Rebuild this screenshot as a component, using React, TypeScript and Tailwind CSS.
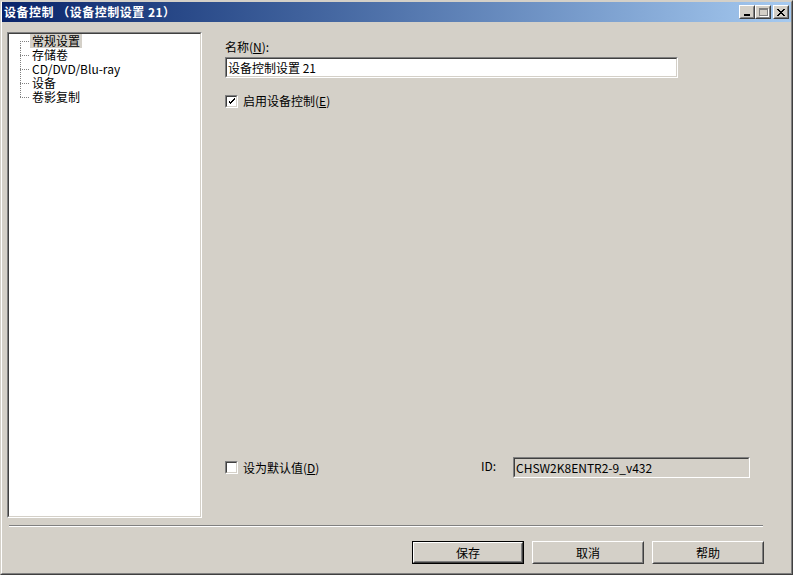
const ui = "font-['Noto_Sans_CJK_SC','Liberation_Sans',sans-serif]";

const treeItems = ["常规设置", "存储卷", "CD/DVD/Blu-ray", "设备", "卷影复制"];

function Checkbox({ checked }: { checked?: boolean }) {
  return (
    <span className="block w-[13px] h-[13px] border border-t-[#808080] border-l-[#808080] border-r-white border-b-white">
      <span className="flex items-center justify-center w-full h-full bg-white border border-t-[#404040] border-l-[#404040] border-r-[#d4d0c8] border-b-[#d4d0c8]">
        {checked && (
          <svg width="7" height="7" viewBox="0 0 7 7" shapeRendering="crispEdges">
            <path d="M0 2h1v3h1v1h1v-1h1v-1h1v-1h1v-1h1v-2h-1v1h-1v1h-1v1h-1v1h-1v-1h-1v-1h-1z" fill="#000" />
          </svg>
        )}
      </span>
    </span>
  );
}

function Sunken({ className, children }: { className: string; children?: React.ReactNode }) {
  return (
    <div className={`border border-t-[#808080] border-l-[#808080] border-r-white border-b-white ${className}`}>
      <div className="h-full border border-t-[#404040] border-l-[#404040] border-r-[#d4d0c8] border-b-[#d4d0c8]">
        {children}
      </div>
    </div>
  );
}

function Button({ label, primary }: { label: string; primary?: boolean }) {
  const inner = (
    <div className="h-full border border-t-white border-l-white border-r-[#404040] border-b-[#404040]">
      <div className="h-full flex items-center justify-center border border-t-transparent border-l-transparent border-r-[#808080] border-b-[#808080] text-[12px] text-black">
        {label}
      </div>
    </div>
  );
  return primary ? (
    <div className="w-[112px] h-[23px] border border-black">{inner}</div>
  ) : (
    <div className="w-[112px] h-[23px]">{inner}</div>
  );
}

function CaptionButton({ children }: { children: React.ReactNode }) {
  return (
    <div className="w-[16px] h-[14px] bg-[#d4d0c8] border border-t-white border-l-white border-r-[#404040] border-b-[#404040]">
      <div className="w-full h-full flex items-center justify-center border border-t-transparent border-l-transparent border-r-[#808080] border-b-[#808080]">
        {children}
      </div>
    </div>
  );
}

export default function App() {
  return (
    <div className={`w-[793px] h-[575px] bg-[#d4d0c8] border border-t-[#d4d0c8] border-l-[#d4d0c8] border-r-[#404040] border-b-[#404040] ${ui}`}>
      <div className="h-full flex flex-col border border-t-transparent border-l-white border-r-[#808080] border-b-[#808080]">
        {/* title bar */}
        <div className="h-[20px] flex items-center justify-between pl-[2px] pr-[2px] bg-gradient-to-r from-[#0a246a] to-[#a6caf0]">
          <span className="text-[12px] font-bold text-white leading-[14px] whitespace-pre tracking-[0.5px]">设备控制 （设备控制设置 21）</span>
          <div className="flex items-center">
            <CaptionButton>
              <span className="block w-[6px] h-[2px] bg-black mt-[6px]" />
            </CaptionButton>
            <CaptionButton>
              <span className="block w-[9px] h-[8px] border border-t-2 border-[#808080] shadow-[1px_1px_0_#fff]" />
            </CaptionButton>
            <div className="w-[2px]" />
            <CaptionButton>
              <svg width="8" height="7" viewBox="0 0 8 7" shapeRendering="crispEdges">
                <path d="M0 0h2v1h1v1h2v-1h1v-1h2v1h-1v1h-1v1h-1v1h1v1h1v1h1v1h-2v-1h-1v-1h-2v1h-1v1h-2v-1h1v-1h1v-1h1v-1h-1v-1h-1v-1h-1z" fill="#000" />
              </svg>
            </CaptionButton>
          </div>
        </div>

        {/* body */}
        <div className="flex pt-[10px] pl-[5px]">
          <div className="w-[195px] h-[486px] border border-t-[#808080] border-l-[#808080] border-r-white border-b-white">
            <div className="h-full bg-white border border-t-[#404040] border-l-[#404040] border-r-[#d4d0c8] border-b-[#d4d0c8] pl-[11px]">
              {treeItems.map((t, i) => (
                <div key={t} className="flex items-center h-[14px]">
                  <svg width="10" height="14" viewBox="0 0 10 14" shapeRendering="crispEdges">
                    <line x1="0.5" y1={i === 0 ? 7 : 0} x2="0.5" y2={i === treeItems.length - 1 ? 7 : 14} stroke="#808080" strokeDasharray="1 1" />
                    <line x1="0" y1="7.5" x2="10" y2="7.5" stroke="#808080" strokeDasharray="1 1" />
                  </svg>
                  <span className={`px-[2px] text-[12px] leading-[14px] text-black ${i === 0 ? "bg-[#d4d0c8]" : ""}`}>{t}</span>
                </div>
              ))}
            </div>
          </div>

          <div className="flex-1 flex flex-col justify-between pl-[23px] pb-[40px]">
            <div className="flex flex-col">
              <div className="mt-[8px] text-[12px] leading-[14px] text-black">
                名称(<span className="underline">N</span>):
              </div>
              <Sunken className="mt-[3px] w-[453px] h-[21px]">
                <div className="h-full bg-white flex items-center pl-[1px] text-[12px] text-black">设备控制设置 21</div>
              </Sunken>
              <div className="mt-[16px] flex items-center gap-[5px]">
                <Checkbox checked />
                <span className="text-[12px] leading-[14px] text-black">
                  启用设备控制(<span className="underline">E</span>)
                </span>
              </div>
            </div>

            <div className="flex items-center h-[21px]">
              <div className="w-[256px] flex items-center gap-[5px]">
                <Checkbox />
                <span className="text-[12px] leading-[14px] text-black">
                  设为默认值(<span className="underline">D</span>)
                </span>
              </div>
              <span className="w-[32px] text-[12px] leading-[14px] text-black -mt-[4px]">ID:</span>
              <Sunken className="w-[237px] h-[21px]">
                <div className="h-full bg-[#d4d0c8] flex items-center pl-[1px] text-[12px] text-black">CHSW2K8ENTR2-9_v432</div>
              </Sunken>
            </div>
          </div>
        </div>

        {/* separator */}
        <div className="mt-[7px] ml-[7px] w-[754px] border-t border-t-[#808080] border-b border-b-white" />

        {/* buttons */}
        <div className="mt-[14px] flex justify-end gap-[8px] pr-[27px]">
          <Button label="保存" primary />
          <Button label="取消" />
          <Button label="帮助" />
        </div>
      </div>
    </div>
  );
}
